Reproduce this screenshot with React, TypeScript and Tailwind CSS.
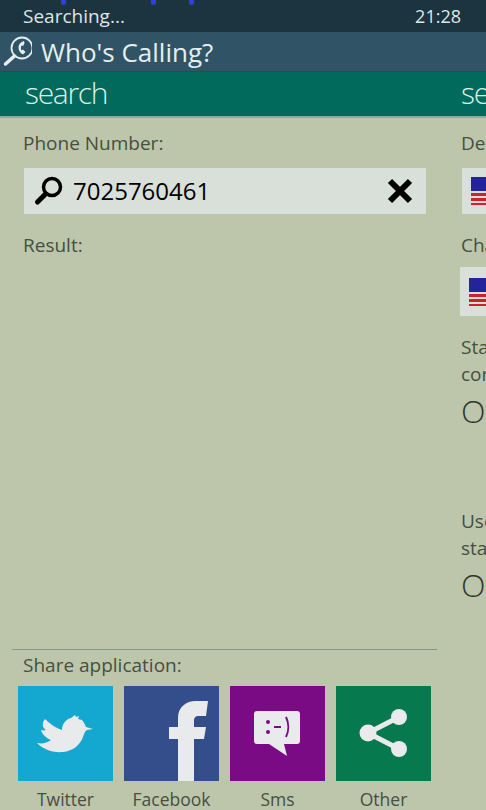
import React from 'react';

const sans = { fontFamily: '"Open Sans", "Noto Sans", sans-serif' };

const Flag: React.FC = () => (
  <svg width="36" height="28" viewBox="0 0 36 28" className="block">
    <rect width="36" height="14" fill="#23239b" />
    <rect y="16" width="36" height="3" fill="#cf2030" />
    <rect y="21" width="36" height="3" fill="#cf2030" />
    <rect y="26" width="36" height="2" fill="#cf2030" />
  </svg>
);

const AppIcon: React.FC = () => (
  <svg width="30" height="36" viewBox="0 0 30 36" className="shrink-0 text-[#e6eef0]">
    <circle cx="20" cy="14" r="10.5" fill="none" stroke="currentColor" strokeWidth="1.8" />
    <line x1="12.5" y1="22" x2="3.5" y2="30" stroke="currentColor" strokeWidth="3.5" strokeLinecap="round" />
    <path d="M22 7c-3.500 1-5.500 3.500-5.500 6.500s1.500 5.500 4.500 7l2.500-2.500-2.500-2.500-1.500 1c-.8-1.500-.8-3.500 0-5l1.700.5 1.300-3z" fill="currentColor" />
  </svg>
);

const SearchIcon: React.FC = () => (
  <svg width="32" height="32" viewBox="0 0 32 32" className="shrink-0">
    <circle cx="19" cy="12" r="8.500" fill="none" stroke="#000" strokeWidth="3.500" />
    <line x1="12.500" y1="19" x2="4.500" y2="27" stroke="#000" strokeWidth="5" strokeLinecap="round" />
  </svg>
);

const CloseIcon: React.FC = () => (
  <svg width="26" height="26" viewBox="0 0 26 26" className="shrink-0">
    <path d="M3 3l20 20M23 3L3 23" stroke="#000" strokeWidth="6" />
  </svg>
);

const TwitterGlyph: React.FC = () => (
  <svg viewBox="0 0 95 95" className="w-full h-full">
    <path
      d="M19 57c5 1 10 0 14-3-5-2-9-6-10-10 2 .5 3.500.5 5 0-3-2-5-6-1-11 5 5 11 9 17 11 0-6 4-11 9-12l4-3 1 2 3-1-1 3 4 1c2 2 3 5 4 7l7 2-6 1c-2 1-3 4-4 7-3 8-10 14-20 15-11 1-20-3-26-9z"
      fill="#e8eaec"
    />
  </svg>
);

const FacebookGlyph: React.FC = () => (
  <svg viewBox="0 0 95 95" className="w-full h-full">
    <path
      d="M54 95V53H45V41H54V32C54 21 62 15 72 15H84L82 30H75C71 30 70 32 70 35V41H82L80 53H70V95Z"
      fill="#e8eaec"
    />
  </svg>
);

const SmsGlyph: React.FC = () => (
  <svg viewBox="0 0 95 95" className="w-full h-full">
    <path d="M27 25H67a3 3 0 0 1 3 3V55a3 3 0 0 1-3 3H54L57 70L39 58H27a3 3 0 0 1-3-3V28a3 3 0 0 1 3-3z" fill="#e8eaec" />
    <circle cx="38" cy="36" r="2" fill="#7b0a85" />
    <circle cx="38" cy="46" r="2" fill="#7b0a85" />
    <rect x="44" y="40" width="7" height="2" fill="#7b0a85" />
    <path d="M56 31c3 6 3 14 0 20" fill="none" stroke="#7b0a85" strokeWidth="2" />
  </svg>
);

const ShareGlyph: React.FC = () => (
  <svg viewBox="0 0 95 95" className="w-full h-full">
    <path d="M63 31L32 47L63 63" fill="none" stroke="#e8eaec" strokeWidth="5" />
    <circle cx="32" cy="47" r="8.500" fill="#e8eaec" />
    <circle cx="63" cy="31" r="8" fill="#e8eaec" />
    <circle cx="63" cy="63" r="8" fill="#e8eaec" />
  </svg>
);

const shares = [
  { label: 'Twitter', bg: 'bg-[#14a8d0]', glyph: <TwitterGlyph /> },
  { label: 'Facebook', bg: 'bg-[#344e8c]', glyph: <FacebookGlyph /> },
  { label: 'Sms', bg: 'bg-[#7b0a85]', glyph: <SmsGlyph /> },
  { label: 'Other', bg: 'bg-[#07794f]', glyph: <ShareGlyph /> },
];

const App: React.FC = () => {
  return (
    <div style={sans} className="relative w-[486px] h-[810px] overflow-hidden flex flex-col bg-[#bdc6aa]">
      {/* scanning dots on the very top edge */}
      <div className="absolute top-0 left-[61px] flex">
        <span className="w-[5px] h-[5px] bg-[#3040e0] rounded-b-sm" />
        <span className="w-[5px] h-[5px] ml-[85px] bg-[#3040e0] rounded-b-sm" />
        <span className="w-[5px] h-[5px] ml-[33px] bg-[#3040e0] rounded-b-sm" />
      </div>

      <div className="h-8 shrink-0 bg-[#1c3340] flex items-center justify-between pl-[23px] pr-[25px] text-[#dfe6e8] text-[18px]">
        <span className="text-[19px]">Searching...</span>
        <span>21:28</span>
      </div>

      <div className="h-10 shrink-0 bg-[#305465] flex items-center pl-[2px] gap-[9px] text-[#e6eef0] text-[26px] border-b border-[#2b4a55]">
        <AppIcon />
        <span className="pt-[2px]">Who's Calling?</span>
      </div>

      <div className="h-[46px] shrink-0 bg-[#016a5c] border-b-2 border-[#7fb09b] flex items-center text-[#d9efe8] text-[30px] font-light tracking-[-1.300px]">
        <div className="w-[461px] shrink-0 pl-[25px] pb-[4px]">search</div>
        <div className="shrink-0 pb-[4px]">settings</div>
      </div>

      <div className="flex-1 min-h-0 flex text-[#454f42] text-[19px]">
        {/* search panel */}
        <div className="w-[461px] shrink-0 pl-3 flex flex-col">
          <div className="w-[425px] h-full flex flex-col">
            <div className="pl-[11px] mt-[11px] leading-[28px]">Phone Number:</div>
            <div className="ml-3 mr-[11px] mt-[11px] h-[46px] bg-[#d9dfd9] flex items-center pl-[9px] pr-[13px] text-black text-[24px]">
              <SearchIcon />
              <span className="ml-2 flex-1">7025760461</span>
              <CloseIcon />
            </div>
            <div className="pl-[11px] mt-[17px] leading-[28px]">Result:</div>

            <div className="mt-auto border-t border-[#8b9880] pl-[11px] pt-[1px] leading-[28px]">Share application:</div>
            <div className="mt-[7px] pl-[6px] pr-[6px] flex justify-between">
              {shares.map(s => (
                <div key={s.label} className="w-[95px] flex flex-col items-center">
                  <div className={`w-[95px] h-[95px] overflow-hidden ${s.bg}`}>{s.glyph}</div>
                  <div className="mt-[7px] leading-[22px] text-[17.500px]">{s.label}</div>
                </div>
              ))}
            </div>
          </div>
        </div>

        {/* settings panel, cut off by the screen edge */}
        <div className="w-[400px] shrink-0 flex flex-col">
          <div className="mt-[11px] leading-[28px]">Default country:</div>
          <div className="mt-[11px] ml-px h-[46px] bg-[#d9dfd9] flex items-center pl-[9px]">
            <Flag />
          </div>
          <div className="mt-[17px] leading-[28px]">Change country:</div>
          <div className="mt-[8px] -ml-px h-[49px] bg-[#d9dfd9] flex items-center pl-[9px]">
            <Flag />
          </div>
          <div className="mt-[18px] leading-[27px]">
            Start search on
            <br />
            contact
          </div>
          <div className="mt-[1px] leading-[44px] text-[32px] font-light text-[#2f372e]">Off</div>
          <div className="mt-[75px] leading-[27px]">
            Use search on
            <br />
            start
          </div>
          <div className="mt-[1px] leading-[44px] text-[32px] font-light text-[#2f372e]">Off</div>
        </div>
      </div>
    </div>
  );
};

export default App;
